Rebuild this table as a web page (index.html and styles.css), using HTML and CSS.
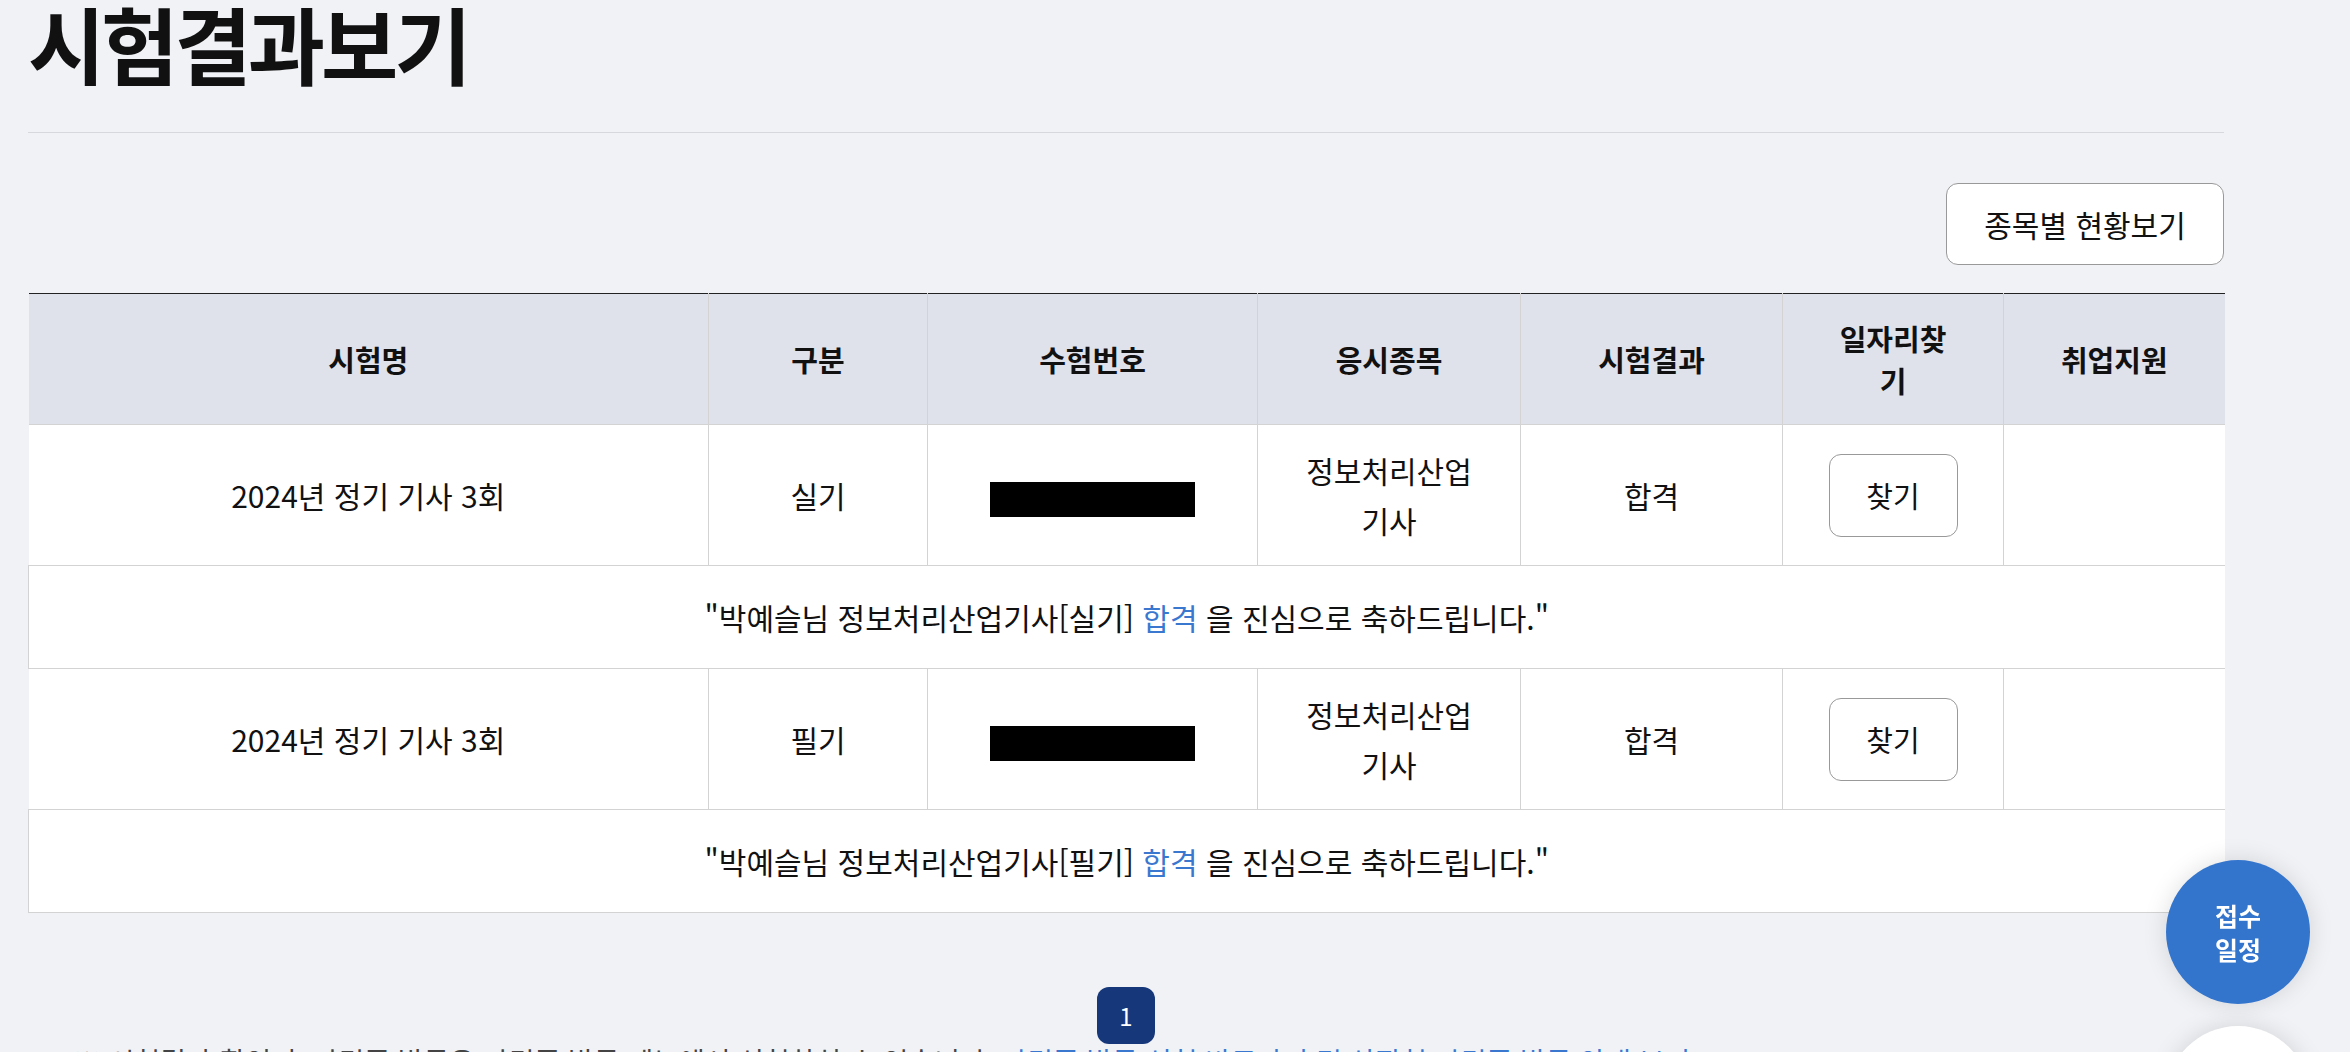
FILE: index.html
```html
<!DOCTYPE html>
<html lang="ko">

<head>
    <meta charset="UTF-8">
    <meta name="viewport" content="width=device-width, initial-scale=1.0">
    <title>시험결과보기</title>
    <link rel="stylesheet" href="styles.css">
</head>

<body>
    <div id="wrap">
        <h2 class="page-title">시험결과보기</h2>

        <div class="btn-area">
            <button type="button" class="btn-line">종목별 현황보기</button>
        </div>

        <table class="result-table">
            <colgroup>
                <col style="width:680px">
                <col style="width:219px">
                <col style="width:330px">
                <col style="width:263px">
                <col style="width:262px">
                <col style="width:221px">
                <col style="width:221px">
            </colgroup>
            <thead>
                <tr>
                    <th>시험명</th>
                    <th>구분</th>
                    <th>수험번호</th>
                    <th>응시종목</th>
                    <th>시험결과</th>
                    <th>일자리찾<br>기</th>
                    <th>취업지원</th>
                </tr>
            </thead>
            <tbody>
                <tr class="row">
                    <td>2024년 정기 기사 3회</td>
                    <td>실기</td>
                    <td><span class="masked"></span></td>
                    <td>정보처리산업<br>기사</td>
                    <td>합격</td>
                    <td><button type="button" class="btn-find">찾기</button></td>
                    <td></td>
                </tr>
                <tr class="msg">
                    <td colspan="7">"박예슬님 정보처리산업기사[실기] <em>합격</em> 을 진심으로 축하드립니다."</td>
                </tr>
                <tr class="row">
                    <td>2024년 정기 기사 3회</td>
                    <td>필기</td>
                    <td><span class="masked"></span></td>
                    <td>정보처리산업<br>기사</td>
                    <td>합격</td>
                    <td><button type="button" class="btn-find">찾기</button></td>
                    <td></td>
                </tr>
                <tr class="msg">
                    <td colspan="7">"박예슬님 정보처리산업기사[필기] <em>합격</em> 을 진심으로 축하드립니다."</td>
                </tr>
            </tbody>
        </table>

        <div class="paging">
            <a href="#" class="on">1</a>
        </div>

        <p class="notice">※ 시험결과 확인 후 자격증 발급은 자격증 발급 메뉴에서 신청하실 수 있습니다. <a href="#">자격증 발급 신청 바로가기 및 상장형 자격증 발급 안내 보기</a></p>
    </div>

    <div class="quick">
        <a href="#" class="quick-btn blue">접수<br>일정</a>
        <a href="#" class="quick-btn white"></a>
    </div>
</body>

</html>
```

FILE: styles.css
```css
*{margin:0;padding:0;box-sizing:border-box;}
body{background:#f1f2f6;font-family:"Noto Sans CJK KR","Noto Sans",sans-serif;color:#111;overflow:hidden;}
#wrap{width:2224px;padding-left:28px;}

.page-title{font-size:84px;line-height:86px;font-weight:700;letter-spacing:-4px;padding-bottom:46px;border-bottom:1px solid #d6d8de;}

.btn-area{display:flex;justify-content:flex-end;margin-top:50px;}
.btn-line{width:278px;height:82px;background:#fff;border:1px solid #999;border-radius:12px;font-family:inherit;font-size:30px;color:#111;cursor:pointer;}

.result-table{width:2196px;margin-top:28px;border-collapse:collapse;table-layout:fixed;border-top:1px solid #222;font-size:30px;text-align:center;}
.result-table th{height:131px;background:#dfe2eb;font-size:29px;font-weight:700;line-height:42px;border-bottom:1px solid #d3d3d3;border-left:1px solid #d3d3d3;padding:0 20px;}
.result-table td{background:#fff;border-bottom:1px solid #d3d3d3;border-left:1px solid #d3d3d3;padding:0 20px;}
.result-table th:first-child,.result-table .row td:first-child{border-left:0;}
.result-table .row td{height:141px;line-height:50px;}
.result-table .msg td{height:103px;border-left:1px solid #d3d3d3;}
.result-table em{font-style:normal;color:#3a78d0;}

.masked{display:inline-block;width:205px;height:35px;background:#000;vertical-align:middle;}
.btn-find{width:129px;height:83px;background:#fff;border:1px solid #999;border-radius:12px;font-family:inherit;font-size:29px;color:#111;vertical-align:middle;}

.paging{display:flex;justify-content:center;margin-top:74px;}
.paging a{display:flex;align-items:center;justify-content:center;width:58px;height:57px;border-radius:12px;font-size:24px;color:#fff;text-decoration:none;}
.paging a.on{background:#16387a;}

.notice{margin-top:1px;padding-left:45px;font-size:28px;line-height:1.2;color:#444;white-space:nowrap;}
.notice a{color:#3a78d0;text-decoration:none;}

.quick{position:fixed;top:860px;right:40px;display:flex;flex-direction:column;gap:22px;}
.quick-btn{display:flex;align-items:center;justify-content:center;width:144px;height:144px;border-radius:50%;font-size:25px;font-weight:700;line-height:34px;text-align:center;text-decoration:none;box-shadow:0 0 24px rgba(0,0,0,0.13);}
.quick-btn.blue{background:#3374cc;color:#fff;}
.quick-btn.white{background:#fff;}
```
